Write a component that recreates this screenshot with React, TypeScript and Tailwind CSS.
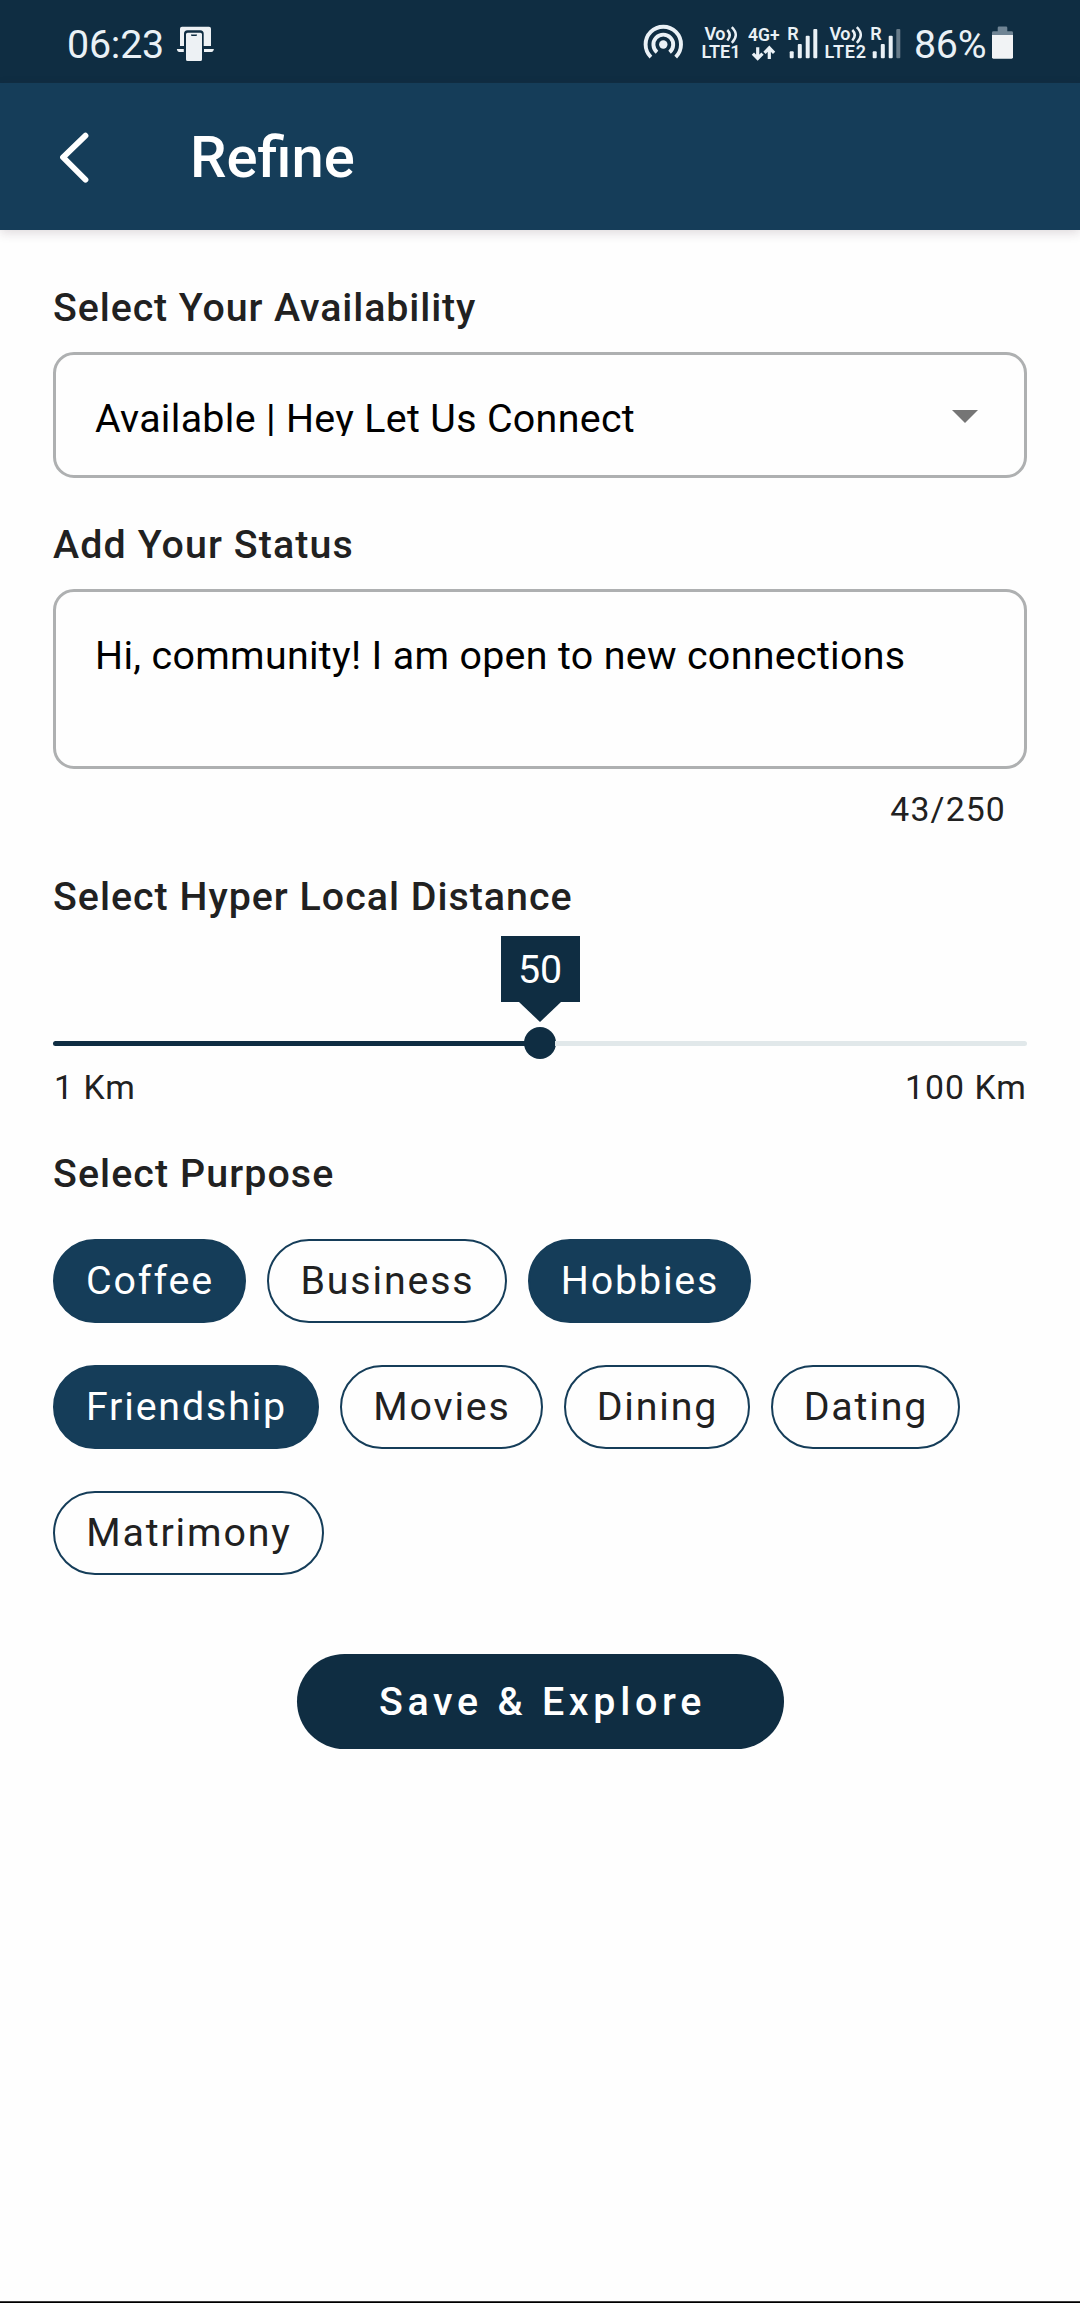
import React from 'react'

const ICON = '#eaf1f6'

function MirrorIcon() {
  return (
    <svg className="ml-[11px] mt-[26px] h-[36px] w-[38px]" viewBox="176 26 38 36" fill="#edf1f4">
      <path d="M180 46V28.700q0-2 2-2h27q2 0 2 2V46h-7.300V33.800q0-3.500-3.500-3.500h-12.700q-3.500 0-3.500 3.500V46z" />
      <path d="M176.800 49h7v3h-4.500q-2 0-2.500-3zM204 49h9.900q-.5 3-2.500 3H204z" />
      <path
        fillRule="evenodd"
        stroke="#0f2d42"
        strokeWidth="1.500"
        paintOrder="stroke"
        d="M187.600 32.700h12.800q1.600 0 1.600 1.600v25.100q0 1.600-1.600 1.600h-12.800q-1.600 0-1.600-1.600V34.300q0-1.600 1.600-1.600zM191 34.600v.4q0 1 1 1h4q1 0 1-1v-.4z"
      />
    </svg>
  )
}

function HotspotIcon() {
  return (
    <svg className="h-[83px] w-[44px]" viewBox="642 0 44 83" fill="none" stroke={ICON} strokeWidth="3.900">
      <circle cx="663.300" cy="44.500" r="4.200" fill={ICON} stroke="none" />
      <path d="M657 52.200a9.900 9.900 0 1 1 12.600 0" />
      <path d="M650.900 57.100a17.700 17.700 0 1 1 24.800 0" />
    </svg>
  )
}

function VolteIcon({ slot, shift }: { slot: string; shift: number }) {
  return (
    <svg className="h-[83px] w-[42px]" viewBox="0 0 42 83" fill={ICON} fontFamily="Roboto" fontWeight="600">
      <text x={2.5 + shift} y="40.300" fontSize="18" textLength="21">Vo</text>
      <path
        d={shift ? 'M27.300 30q5 5 0 10.500M31.800 27.200q8 8 0 15.600' : 'M25.300 30q5 5 0 10.500M29.800 27.200q8 8 0 15.600'}
        fill="none"
        stroke={ICON}
        strokeWidth="2.500"
      />
      <text x="-.5" y="58" fontSize="18" textLength={shift ? 41.5 : 39}>{slot}</text>
    </svg>
  )
}

function DataIcon() {
  return (
    <svg className="ml-[4px] h-[83px] w-[34px]" viewBox="748 0 34 83" fill={ICON} fontFamily="Roboto" fontWeight="600">
      <text x="748" y="41.300" fontSize="17.500" textLength="31.500">4G+</text>
      <g fill="none" stroke={ICON} strokeWidth="3.200">
        <path d="M757.700 47.300v11M752.900 53.600l4.800 4.900 4.800-4.900" />
        <path d="M769.300 59v-11M764.500 52.800l4.800-4.900 4.800 4.900" />
      </g>
    </svg>
  )
}

function SignalIcon({ weak }: { weak?: boolean }) {
  return (
    <svg className="h-[83px] w-[32px]" viewBox="787 0 32 83" fill={ICON} fontFamily="Roboto" fontWeight="600">
      <text x="787.300" y="40.300" fontSize="18">R</text>
      <rect x="789.700" y="51.300" width="4" height="7" rx="1" />
      <rect x="797.800" y="44" width="4" height="14.300" rx="1" />
      <rect x="805.700" y="35.700" width="4" height="22.600" rx="1" />
      <rect x="813.300" y="29" width="4" height="29.300" rx="1" opacity={weak ? 0.4 : 1} />
    </svg>
  )
}

function BatteryIcon() {
  return (
    <svg className="h-[83px] w-[22px]" viewBox="992 0 22 83">
      <path d="M997.700 31.300v-3.500q0-1.300 1.300-1.300h7q1.300 0 1.300 1.300v3.500h4.300q1.400 0 1.400 1.400V35h-21v-2.300q0-1.400 1.400-1.400z" fill="#6f8494" />
      <path d="M992 35h21v22.300q0 1.400-1.400 1.400h-18.200q-1.400 0-1.400-1.400z" fill="#f1f3f5" />
    </svg>
  )
}

function StatusBar() {
  return (
    <div className="flex h-[83px] shrink-0 items-start bg-[#0f2d42] pl-[67px] text-[39.375px] text-[#eaf1f6]">
      <span className="mt-[22px] w-[98px] leading-[46px] tracking-[-0.2px]">06:23</span>
      <MirrorIcon />
      <div className="ml-[428px] flex items-start">
        <HotspotIcon />
        <div className="ml-[16px] flex">
          <VolteIcon slot="LTE1" shift={0} />
        </div>
        <DataIcon />
        <div className="ml-[5px] flex">
          <SignalIcon />
        </div>
        <div className="ml-[6px] flex">
          <VolteIcon slot="LTE2" shift={2} />
        </div>
        <div className="ml-[3px] flex">
          <SignalIcon weak />
        </div>
        <span className="ml-[12px] mt-[22px] w-[78px] leading-[46px] tracking-[-0.3px]">86%</span>
        <BatteryIcon />
      </div>
    </div>
  )
}

function Label({ children, className }: { children: React.ReactNode; className: string }) {
  return <h2 className={`text-[39.375px] leading-[46px] font-medium ${className}`}>{children}</h2>
}

type Chip = { name: string; width: string; selected?: boolean }

const chipRows: Chip[][] = [
  [
    { name: 'Coffee', width: 'w-[193px]', selected: true },
    { name: 'Business', width: 'w-[240px]' },
    { name: 'Hobbies', width: 'w-[223px]', selected: true },
  ],
  [
    { name: 'Friendship', width: 'w-[266px]', selected: true },
    { name: 'Movies', width: 'w-[203px]' },
    { name: 'Dining', width: 'w-[186px]' },
    { name: 'Dating', width: 'w-[189px]' },
  ],
  [{ name: 'Matrimony', width: 'w-[271px]' }],
]

export default function App() {
  return (
    <div className="flex h-[2303px] w-[1080px] flex-col overflow-hidden bg-[#fefefe] font-['Roboto',sans-serif] text-[#212121]">
      <StatusBar />
      <header className="flex h-[147px] shrink-0 items-start bg-[#153d59] text-white shadow-[0_3px_10px_rgba(60,30,50,0.16)]">
        <svg className="mt-[45px] ml-[56px] h-[58px] w-[38px]" viewBox="56 128 38 58" fill="none" stroke="currentColor" strokeWidth="5.800" strokeLinecap="round" strokeLinejoin="round">
          <path d="M85.500 135.700L63 157.300l22.500 22.400" />
        </svg>
        <h1 className="mt-[39px] ml-[96px] text-[58px] leading-[70px] font-medium">Refine</h1>
      </header>

      <main className="flex flex-1 flex-col px-[53px] pt-[55px]">
        <Label className="tracking-[0.9px]">Select Your Availability</Label>
        <div className="mt-[21px] flex h-[126px] items-start justify-between rounded-[21px] border-[3px] border-[#aeb0b1] pr-[46px] pl-[39px] text-black">
          <span className="mt-[41px] h-[40px] overflow-hidden text-[39.375px] leading-[46px] tracking-[0.32px]">Available | Hey Let Us Connect</span>
          <svg className="mt-[55px] h-[13px] w-[26px]" viewBox="0 0 26 13" fill="#757575">
            <path d="M0 0h26L13 13z" />
          </svg>
        </div>

        <Label className="mt-[44px] tracking-[1.1px]">Add Your Status</Label>
        <div className="mt-[21px] h-[180px] rounded-[21px] border-[3px] border-[#aeb0b1] pt-[41px] pl-[39px] text-[39.375px] leading-[46px] tracking-[0.33px] text-black">
          Hi, community! I am open to new connections
        </div>
        <p className="mt-[21px] pr-[21px] text-right text-[33.75px] leading-[40px] tracking-[1.15px]">43/250</p>

        <Label className="mt-[44px] tracking-[1px]">Select Hyper Local Distance</Label>
        <div className="flex h-[148px] flex-col items-center pt-[16px]">
          <div className="flex h-[66px] w-[79px] items-start justify-center bg-[#0f2d42] pt-[11px] text-[39.375px] leading-[46px] text-white">50</div>
          <svg className="h-[20px] w-[42px]" viewBox="0 0 42 20" fill="#0f2d42">
            <path d="M0 0h42L21 20z" />
          </svg>
          <div className="mt-[5px] flex h-[32px] w-full items-center">
            <div className="h-[5px] flex-1 rounded-l-full bg-[#0f2d42]" />
            <div className="-mx-px h-[32px] w-[32px] rounded-full bg-[#0f2d42]" />
            <div className="h-[5px] flex-1 rounded-r-full bg-[#e1e8ea]" />
          </div>
        </div>
        <div className="flex justify-between pl-px text-[33.75px] leading-[40px] tracking-[1.05px]">
          <span>1 Km</span>
          <span>100 Km</span>
        </div>

        <Label className="mt-[43px] tracking-[1.08px]">Select Purpose</Label>
        <div className="mt-[42px] flex flex-col gap-[42px]">
          {chipRows.map((row, i) => (
            <div key={i} className="flex gap-[21px]">
              {row.map(({ name, width, selected }) => (
                <button
                  key={name}
                  className={`h-[84px] rounded-full border-2 border-[#153d59] pb-px pl-px text-[39.375px] leading-[46px] tracking-[1.84px] ${width} ${selected ? 'bg-[#153d59] text-white' : ''}`}
                >
                  {name}
                </button>
              ))}
            </div>
          ))}
        </div>

        <button className="mt-[79px] h-[95px] w-[487px] self-center rounded-full bg-[#0f2d42] pt-px pl-[5px] text-[39.375px] leading-[46px] font-medium tracking-[4.72px] text-white">
          Save &amp; Explore
        </button>
      </main>
      <div className="h-[2px] shrink-0 border-t border-[#3a3a3a] bg-black" />
    </div>
  )
}
